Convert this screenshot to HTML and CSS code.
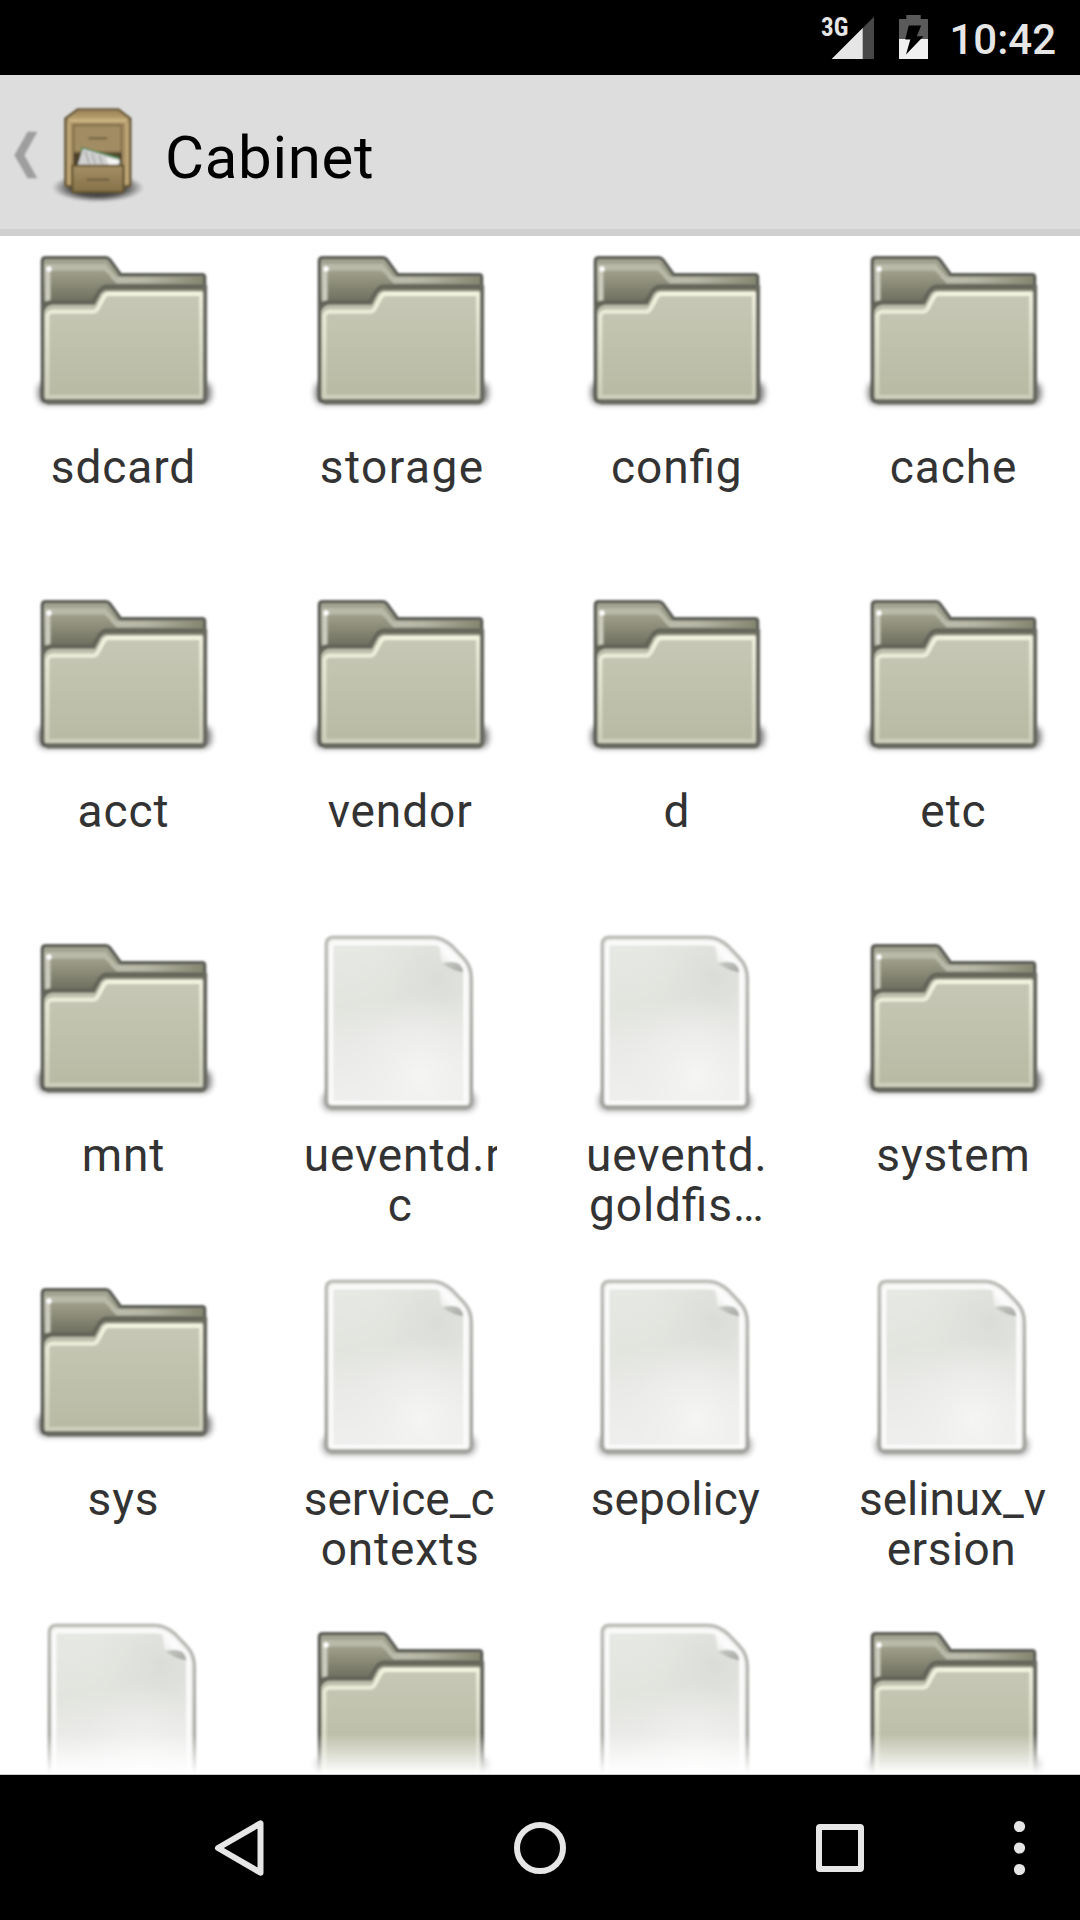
FILE: index.html
```html
<!DOCTYPE html>
<html lang="en">
<head>
<meta charset="utf-8">
<title>Cabinet</title>
<link rel="stylesheet" href="styles.css">
</head>
<body>
<svg class="defs" width="0" height="0" aria-hidden="true">
  <defs>
    <linearGradient id="tab" gradientUnits="userSpaceOnUse" x1="0" y1="88" x2="0" y2="215"><stop offset="0" stop-color="#a5a593"/><stop offset=".35" stop-color="#9a9a86"/><stop offset="1" stop-color="#6f6f5f"/></linearGradient>
    <linearGradient id="strip" x1="0" y1="0" x2="1" y2="0"><stop offset="0" stop-color="#c0c0b2"/><stop offset=".4" stop-color="#b5b5a6"/><stop offset="1" stop-color="#85866f"/></linearGradient>
    <linearGradient id="front" x1="0" y1="0" x2="0" y2="1"><stop offset="0" stop-color="#c7c8b6"/><stop offset="1" stop-color="#b8baa3"/></linearGradient>
    <linearGradient id="glow" x1="0" y1="0" x2="0" y2="1"><stop offset="0" stop-color="#f3f3e0"/><stop offset=".3" stop-color="#e6e7d5"/><stop offset="1" stop-color="#cfd0bc"/></linearGradient>
    <linearGradient id="paper" x1="0" y1="0" x2=".15" y2="1"><stop offset="0" stop-color="#e6e8e4"/><stop offset=".4" stop-color="#e2e4df"/><stop offset=".62" stop-color="#e9eae7"/><stop offset="1" stop-color="#efefee"/></linearGradient>
    <radialGradient id="shade" cx=".8" cy=".2" r=".6"><stop offset="0" stop-color="#d7dad4" stop-opacity=".7"/><stop offset="1" stop-color="#e2e4df" stop-opacity="0"/></radialGradient>
    <radialGradient id="shine" cx=".67" cy=".83" r=".5"><stop offset="0" stop-color="#f5f5f4"/><stop offset="1" stop-color="#f0f0ef" stop-opacity="0"/></radialGradient>
    <linearGradient id="edge" x1="0" y1="0" x2="0" y2="1"><stop offset="0" stop-color="#bdbeb9"/><stop offset="1" stop-color="#a3a49f"/></linearGradient>
    <linearGradient id="curl" x1="0" y1="1" x2="1" y2="0"><stop offset="0" stop-color="#dcdedb"/><stop offset=".5" stop-color="#fdfdfd"/><stop offset="1" stop-color="#e8e9e7"/></linearGradient>
    <linearGradient id="curlshade" x1="0" y1="0" x2="1" y2="1"><stop offset="0" stop-color="#c9cbc7"/><stop offset="1" stop-color="#a5a7a2"/></linearGradient>
    <linearGradient id="wood" x1="0" y1="0" x2="0" y2="1"><stop offset="0" stop-color="#a58f65"/><stop offset="1" stop-color="#857149"/></linearGradient>
    <linearGradient id="top" x1="0" y1="0" x2="0" y2="1"><stop offset="0" stop-color="#9d855a"/><stop offset=".5" stop-color="#ae9566"/><stop offset="1" stop-color="#d0b786"/></linearGradient>
    <radialGradient id="ground"><stop offset="0" stop-color="#222"/><stop offset=".6" stop-color="#333" stop-opacity=".85"/><stop offset="1" stop-color="#444" stop-opacity="0"/></radialGradient>
    <filter id="soft" x="-20%" y="-40%" width="140%" height="180%"><feGaussianBlur stdDeviation="9"/></filter>
    <filter id="smooth" x="-5%" y="-5%" width="110%" height="110%"><feGaussianBlur stdDeviation="2.8"/></filter>

    <symbol id="folder" viewBox="84 30 576 576">
      <rect x="114" y="456" width="520" height="66" rx="24" fill="#000" opacity=".5" filter="url(#soft)"/>
      <g filter="url(#smooth)">
        <path d="M137 83H317Q325 83 330 90L362 134H606Q614 134 614 142V500Q614 514 602 514H140Q127 514 127 500V93Q127 83 137 83Z" fill="url(#tab)" stroke="#5c5d57" stroke-width="10"/>
        <path d="M340 139L362 142H608V160H350L330 140Z" fill="url(#strip)"/>
        <path d="M133 102H317L356 148H372L350 156L314 122H152V214H134Z" fill="#b9b9a9"/>
        <path d="M144 212V116" fill="none" stroke="#cfcfc3" stroke-width="9"/>
        <circle cx="147" cy="117" r="8" fill="#fff"/>
        <path d="M128 238Q136 217 152 217H278L300 182Q308 170 322 170H614" fill="none" stroke="#64655a" stroke-width="13"/>
        <path d="M133 500V244Q140 226 155 226H286L306 190Q311 183 322 183H608V506H139Q133 506 133 500Z" fill="url(#front)"/>
        <path d="M137 262Q142 232 158 229H288L308 190" fill="none" stroke="#bcbcaa" stroke-width="9"/>
        <path d="M142 501V260Q143 245 157 245H280Q288 245 294 234L310 204Q315 192 326 192H604V501Z" fill="none" stroke="url(#glow)" stroke-width="12"/>
        <path d="M615 165V500Q615 516 602 516H140" fill="none" stroke="#696a62" stroke-width="13"/>
      </g>
    </symbol>

    <symbol id="file" viewBox="74 54 576 576">
      <rect x="126" y="545" width="460" height="58" rx="24" fill="#000" opacity=".32" filter="url(#soft)"/>
      <g filter="url(#smooth)">
        <path d="M160 82H455Q485 82 515 108L550 145Q573 170 573 205V572Q573 592 553 592H158Q138 592 138 572V104Q138 82 160 82Z" fill="#f4f4f3" stroke="url(#edge)" stroke-width="11"/>
        <path d="M150 592H560" stroke="#a2a39e" stroke-width="13"/>
        <path d="M160 106H476L484 155L548 186V574H160Z" fill="url(#paper)"/>
        <path d="M160 106H476L484 155L548 186V574H160Z" fill="url(#shade)"/>
        <path d="M160 106H476L484 155L548 186V574H160Z" fill="url(#shine)"/>
        <path d="M153 578V112Q152 101 164 101H455Q485 101 508 125L540 158Q555 175 555 205V578Z" fill="none" stroke="#fbfbfb" stroke-width="10"/>
        <path d="M482 108Q490 130 486 158L552 186Q545 150 515 124Q500 110 482 108Z" fill="url(#curl)"/>
        <path d="M485 160Q515 150 534 160Q548 170 549 187Q520 184 485 160Z" fill="url(#curlshade)"/>
      </g>
    </symbol>
  </defs>
</svg>

<div class="screen">
  <div class="status">
    <svg class="signal" width="56" height="48" viewBox="820 14 56 48">
      <path d="M874 16.7V59H831.7Z" fill="#484848"/>
      <path d="M862.7 28V59H831.7Z" fill="#e6e6e6"/>
      <text x="821" y="35.5" class="net">3G</text>
    </svg>
    <svg class="battery" width="30" height="48" viewBox="899 14 30 48">
      <path d="M906.3 15H920.7V19H928V39H899V19H906.3Z" fill="#5a5a5a"/>
      <path d="M899 39H928V59H899Z" fill="#f0f0f0"/>
      <path d="M908.7 25.5H921.2L916.8 36.3H923.5L906 54.5L910.3 39.5H905.3Z" fill="#000"/>
    </svg>
    <span class="clock">10:42</span>
  </div>

  <header class="bar">
    <svg width="150" height="120" viewBox="0 0 450 360">
      <g filter="url(#smooth)">
        <path d="M53 110H82L43 181L82 250H53L13 181Z" fill="#9e9e9e"/>
        <ellipse cx="264" cy="278" rx="138" ry="44" fill="url(#ground)"/>
        <path d="M203 43H325L361 71V268Q361 274 352 274H176Q166 274 166 266V71Z" fill="#a48d62" stroke="#655738" stroke-width="7"/>
        <path d="M204 47H324L354 72L350 80H178L173 72Z" fill="url(#top)"/>
        <path d="M177 82V268M351 82V268" stroke="#c4ab7a" stroke-width="8"/>
        <path d="M180 79H348" stroke="#d0b786" stroke-width="6"/>
        <rect x="191" y="91" width="143" height="80" fill="#a28c63" stroke="#7b6947" stroke-width="5"/>
        <path d="M235 130H292" stroke="#6f5f40" stroke-width="6"/>
        <rect x="190" y="174" width="146" height="38" fill="#4e4229"/>
        <path d="M214 156L329 187L318 208H210Z" fill="#4d8755"/>
        <path d="M219 161L329 194V210H203Z" fill="#d2d2d2"/>
        <path d="M226 170L238 206M246 176L256 206M268 182L276 206" stroke="#b4b4b4" stroke-width="7"/>
        <path d="M288 188L329 196L320 210H296Z" fill="#f6f6f6"/>
        <rect x="187" y="212" width="153" height="79" fill="url(#wood)" stroke="#62532f" stroke-width="6"/>
        <path d="M230 254H298" stroke="#6f5f40" stroke-width="7"/>
      </g>
    </svg>
    <h1>Cabinet</h1>
  </header>

  <main class="grid">
    <div class="item"><svg><use href="#folder"/></svg><span>sdcard</span></div>
    <div class="item"><svg><use href="#folder"/></svg><span class="wide">storage</span></div>
    <div class="item"><svg><use href="#folder"/></svg><span>config</span></div>
    <div class="item"><svg><use href="#folder"/></svg><span>cache</span></div>

    <div class="item"><svg><use href="#folder"/></svg><span>acct</span></div>
    <div class="item"><svg><use href="#folder"/></svg><span>vendor</span></div>
    <div class="item"><svg><use href="#folder"/></svg><span>d</span></div>
    <div class="item"><svg><use href="#folder"/></svg><span>etc</span></div>

    <div class="item"><svg><use href="#folder"/></svg><span>mnt</span></div>
    <div class="item"><svg><use href="#file"/></svg><span>ueventd.r<br>c</span></div>
    <div class="item"><svg><use href="#file"/></svg><span>ueventd.<br>goldfis…</span></div>
    <div class="item"><svg><use href="#folder"/></svg><span>system</span></div>

    <div class="item"><svg><use href="#folder"/></svg><span>sys</span></div>
    <div class="item"><svg><use href="#file"/></svg><span><b class="tight">service_c</b><br>ontexts</span></div>
    <div class="item"><svg><use href="#file"/></svg><span class="tight">sepolicy</span></div>
    <div class="item"><svg><use href="#file"/></svg><span><b class="tight">selinux_v</b><br><b class="half">ersion</b></span></div>

    <div class="item"><svg><use href="#file"/></svg></div>
    <div class="item"><svg><use href="#folder"/></svg></div>
    <div class="item"><svg><use href="#file"/></svg></div>
    <div class="item"><svg><use href="#folder"/></svg></div>
    <div class="fade"></div>
  </main>

  <nav class="nav">
    <svg width="1080" height="145" viewBox="0 1775 1080 145" fill="none" stroke="#e6e6e6" stroke-width="6" stroke-linejoin="round">
      <path d="M218 1848L260.5 1823.3V1872.7Z"/>
      <circle cx="540" cy="1848" r="23"/>
      <rect x="819" y="1827" width="42" height="42" rx="1"/>
      <g fill="#e6e6e6" stroke="none"><circle cx="1019.5" cy="1826.5" r="5.6"/><circle cx="1019.5" cy="1848" r="5.6"/><circle cx="1019.5" cy="1869.5" r="5.6"/></g>
    </svg>
  </nav>
</div>
</body>
</html>
```
FILE: styles.css
```css
* { box-sizing: border-box; }
body { margin: 0; background: #fff; font-family: Roboto, sans-serif; }
.defs { position: absolute; }
.screen { width: 1080px; height: 1920px; display: flex; flex-direction: column; overflow: hidden; }

.status { height: 75px; background: #000; color: #e6e6e6; display: flex; justify-content: flex-end; align-items: flex-start; padding: 14px 24px 0 0; }
.signal { margin-right: 23px; }
.battery { margin-right: 20px; }
.net { font: 700 25px "Roboto Condensed", Roboto, sans-serif; fill: #e6e6e6; }
.clock { font-size: 42px; font-weight: 500; line-height: 52px; }

.bar { height: 161px; flex: none; background: #ddd; border-bottom: 7px solid #d0d0d0; display: flex; align-items: flex-start; padding: 20px 0 0 10px; }
.bar svg { flex: none; }
.bar h1 { margin: 28px 0 0 5px; font-size: 60px; font-weight: 400; line-height: 70px; letter-spacing: .7px; color: #000; }

.grid { position: relative; height: 1539px; flex: none; overflow: hidden; display: grid; grid-template-columns: repeat(4, 192px); grid-auto-rows: 344px; justify-content: space-between; align-content: start; padding: 4px 30px 0 28px; border-bottom: 1px solid #ccc; }
.item { display: flex; flex-direction: column; overflow: hidden; }
.item svg { display: block; width: 192px; height: 192px; flex: none; }
.item span { margin: 9.5px 0 0 -1px; font-size: 46px; line-height: 50.5px; letter-spacing: .9px; font-feature-settings: "liga" 1; color: #333; text-align: center; white-space: nowrap; }
.item b { font-weight: 400; }
.item b.tight { letter-spacing: 0; margin-right: 2px; }
.item span.tight { letter-spacing: .1px; margin-left: -4px; }
.item .half { margin-right: 4px; letter-spacing: .5px; }
.item span.wide { letter-spacing: 1.5px; margin-left: 3px; }
.fade { position: absolute; left: 0; right: 0; bottom: 0; height: 40px; background: linear-gradient(rgba(255,255,255,0), #fff); }

.nav { height: 145px; flex: none; background: #000; }
.nav svg { display: block; }
```
